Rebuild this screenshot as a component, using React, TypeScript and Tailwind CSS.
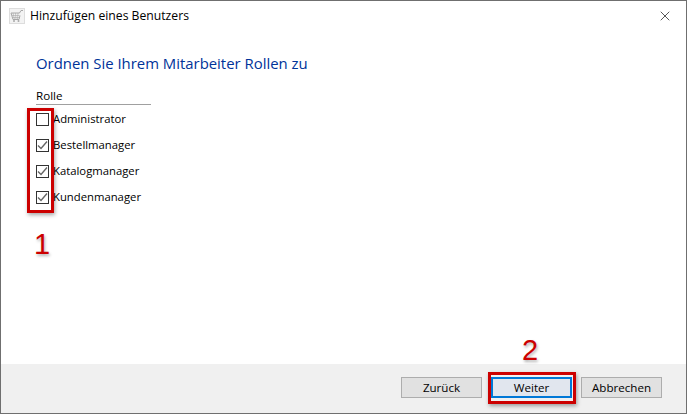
import React from "react";
import { X } from "lucide-react";

const font = "font-['Open_Sans',sans-serif]";

const roles = [
  { name: "Administrator", checked: false },
  { name: "Bestellmanager", checked: true },
  { name: "Katalogmanager", checked: true },
  { name: "Kundenmanager", checked: true },
];

const CartIcon = () => (
  <svg width="16" height="16" viewBox="0 0 16 16" fill="none" stroke="#a8a8a8" strokeWidth="1">
    <rect x="0.500" y="0.500" width="15" height="15" fill="#f3f3f3" stroke="#dddddd" />
    <path d="M2 5h8.500l1.500-2.500h2" />
    <path d="M2 5l2 6.500h6l1-4" />
    <path d="M4 5l1.500 6.500M6.500 5l.5 6.500M9 5l-.5 6.500M3 7.500h7.500M3.500 9.500h6.500" strokeWidth="0.6" />
    <circle cx="5" cy="13" r="1" fill="#a8a8a8" stroke="none" />
    <circle cx="9.500" cy="13" r="1" fill="#a8a8a8" stroke="none" />
  </svg>
);

const Check = () => (
  <svg width="11" height="11" viewBox="0 0 11 11" fill="none" stroke="#666666" strokeWidth="1.400">
    <path d="M1 5.500l3 3 6-7" />
  </svg>
);

const Button = ({ label, active }: { label: string; active?: boolean }) => (
  <button
    className={
      active
        ? "w-[81px] h-[21px] flex items-center justify-center border-2 border-[#0078d7] bg-[#e1e6ee] text-[11.600px] text-black"
        : "w-[81px] h-[21px] flex items-center justify-center border border-[#adadad] bg-[#e1e1e1] text-[11.600px] text-black"
    }
  >
    {label}
  </button>
);

export default function App() {
  return (
    <div className={`${font} relative w-[687px] h-[414px] bg-white border border-[#6f6f6f] flex flex-col overflow-hidden`}>
      <div className="h-[30px] flex items-center pl-[8px] pr-[13px] gap-[5px] shrink-0">
        <CartIcon />
        <span className="text-[12.200px] text-black">Hinzufügen eines Benutzers</span>
        <X className="ml-auto" size={16} strokeWidth={1} color="#000000" />
      </div>
      <div className="flex-1 pl-[35px] pt-[22px]">
        <h1 className="text-[14.900px] leading-[20px] text-[#003399]">Ordnen Sie Ihrem Mitarbeiter Rollen zu</h1>
        <div className="w-[115px] mt-[14px] border-b border-[#a0a0a0] text-[11.600px] leading-[17px] text-black">Rolle</div>
        <ul className="mt-[1px] flex flex-col">
          {roles.map((r) => (
            <li key={r.name} className="h-[26px] flex items-center text-[11.300px] text-black">
              <span className="w-[13px] h-[13px] border border-[#333333] bg-white flex items-center justify-center mr-[4px]">
                {r.checked && <Check />}
              </span>
              {r.name}
            </li>
          ))}
        </ul>
      </div>
      <div className="h-[49px] shrink-0 bg-[#f0f0f0] flex justify-end items-center gap-[9px] pr-[24px] pb-[2px]">
        <Button label="Zurück" />
        <Button label="Weiter" active />
        <Button label="Abbrechen" />
      </div>

      {/* annotations */}
      <div className="absolute left-[26px] top-[107px] w-[27px] h-[105px] border-[3px] border-[#cc0000] shadow-[1px_2px_4px_rgba(0,0,0,0.35)]" />
      <div className="absolute left-[487px] top-[371px] w-[88px] h-[32px] border-[3px] border-[#cc0000] shadow-[1px_2px_4px_rgba(0,0,0,0.35)]" />
      <span className="absolute left-[33px] top-[225px] font-['Liberation_Sans',sans-serif] text-[29px] leading-[36px] text-[#cc0000] [text-shadow:1px_2px_3px_rgba(0,0,0,0.3)]">1</span>
      <span className="absolute left-[521px] top-[331px] font-['Liberation_Sans',sans-serif] text-[29px] leading-[36px] text-[#cc0000] [text-shadow:1px_2px_3px_rgba(0,0,0,0.3)]">2</span>
    </div>
  );
}
